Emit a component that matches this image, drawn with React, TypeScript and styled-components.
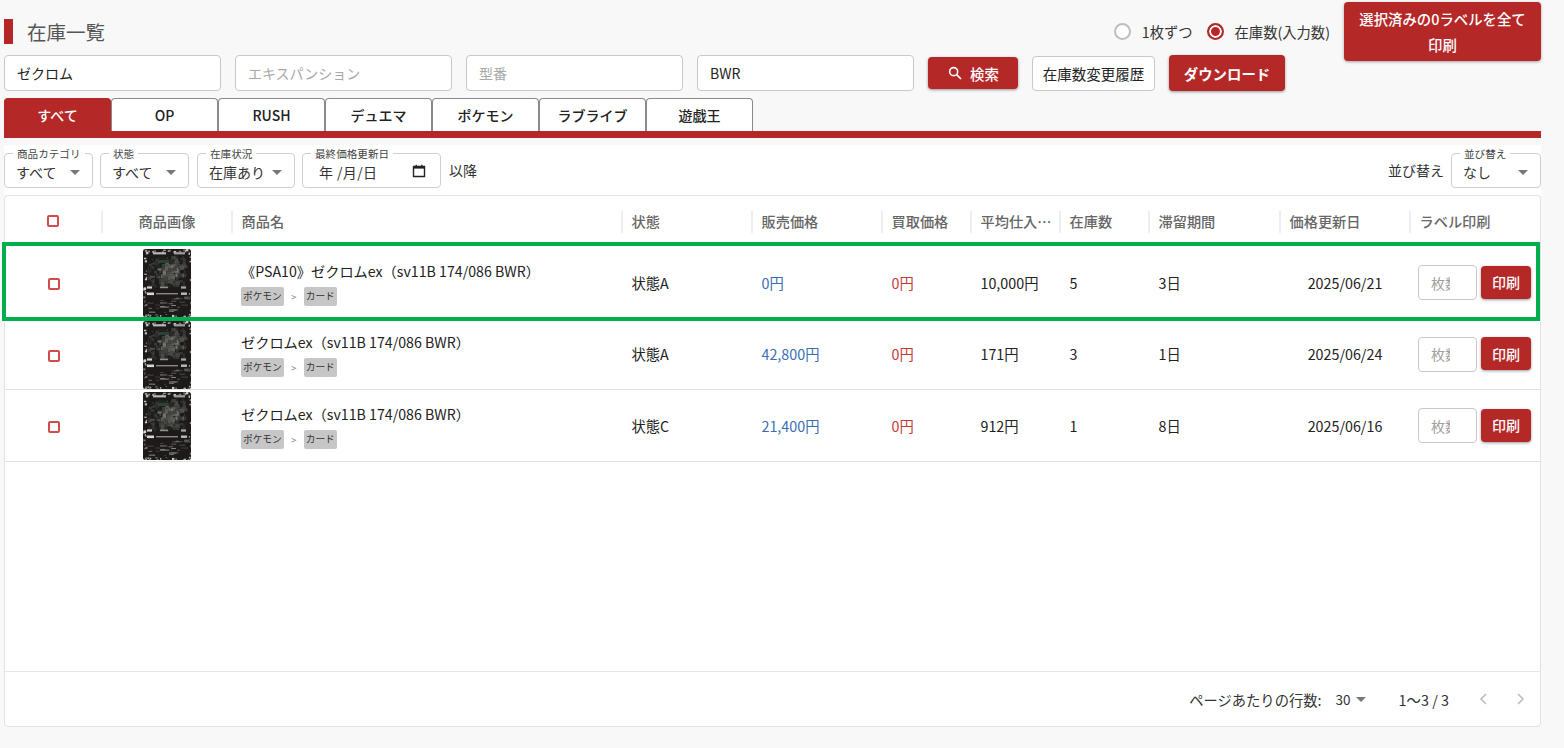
import React from "react";
import styled, { createGlobalStyle } from "styled-components";

const RED = "#b52828";
const COLS = "98px 130px 390px 130px 130px 89px 89px 89px 131px 130px 130px";

const Global = createGlobalStyle`
  html, body { margin: 0; padding: 0; background: #f8f8f8; }
  body { font-family: "Noto Sans CJK JP", "Noto Sans", sans-serif; color: #222; }
  * { box-sizing: border-box; }
`;

const Page = styled.div`
  width: 1564px;
  height: 748px;
  padding: 2px 23px 0 4px;
  position: relative;
  overflow: hidden;
`;
const Top = styled.div`
  display: grid;
  grid-template-columns: 1fr 197px;
  column-gap: 14px;
  height: 96px;
`;
const TopLeft = styled.div`
  display: flex;
  flex-direction: column;
`;
const TitleRow = styled.div`
  display: flex;
  align-items: center;
  justify-content: space-between;
  height: 25px;
  margin-top: 17px;
  margin-bottom: 11px;
`;
const Title = styled.h1`
  margin: 0;
  height: 25px;
  border-left: 9px solid ${RED};
  padding-left: 14px;
  font-size: 19.5px;
  line-height: 26px;
  font-weight: 400;
  color: #555;
`;
const Radios = styled.div`
  display: flex;
  align-items: center;
  font-size: 14.3px;
  color: #333;
`;
const Radio = styled.span<{ $on?: boolean }>`
  width: 17px;
  height: 17px;
  border-radius: 50%;
  border: 2px solid ${(p) => (p.$on ? RED : "#bdbdbd")};
  background: ${(p) => (p.$on ? RED : "#fff")};
  box-shadow: ${(p) => (p.$on ? "inset 0 0 0 2px #fff" : "none")};
  margin-left: ${(p) => (p.$on ? "14px" : "0")};
  margin-right: 11px;
`;
const PrintAll = styled.button`
  align-self: start;
  height: 59px;
  border: 0;
  border-radius: 4px;
  background: ${RED};
  color: #fff;
  font: 500 14.4px/26px "Noto Sans CJK JP", sans-serif;
  padding: 3px 14px;
  box-shadow: 0 1px 3px rgba(0, 0, 0, 0.35);
`;
const SearchRow = styled.div`
  display: flex;
  align-items: center;
  gap: 14px;
  height: 36px;
`;
const TextField = styled.input`
  width: 217px;
  height: 36px;
  border: 1px solid #c8c8c8;
  border-radius: 4px;
  background: #fff;
  padding: 0 12px;
  font: 400 14px "Noto Sans CJK JP", sans-serif;
  color: #222;
  &::placeholder { color: #a8a8a8; font-weight: 400; opacity: 1; }
`;
const RedButton = styled.button<{ $w: number; $h: number; $weight: number }>`
  width: ${(p) => p.$w}px;
  height: ${(p) => p.$h}px;
  display: flex;
  align-items: center;
  justify-content: center;
  gap: 7px;
  border: 0;
  border-radius: 4px;
  background: ${RED};
  color: #fff;
  font: ${(p) => p.$weight} 14.4px "Noto Sans CJK JP", sans-serif;
  padding: 0;
  box-shadow: 0 1px 3px rgba(0, 0, 0, 0.4);
`;
const HistoryButton = styled.button`
  width: 123px;
  height: 35px;
  border: 1px solid #c8c8c8;
  border-radius: 4px;
  background: #fff;
  color: #222;
  font: 400 14.5px "Noto Sans CJK JP", sans-serif;
  padding: 0;
  white-space: nowrap;
`;
const Tabs = styled.div`
  display: flex;
  height: 40px;
  border-bottom: 7px solid ${RED};
`;
const Tab = styled.div<{ $on?: boolean }>`
  width: 107px;
  height: 33px;
  display: flex;
  align-items: center;
  justify-content: center;
  border: 1px solid ${(p) => (p.$on ? RED : "#8a8a8a")};
  border-bottom: 0;
  border-radius: 4px 4px 0 0;
  background: ${(p) => (p.$on ? RED : "#fff")};
  color: ${(p) => (p.$on ? "#fff" : "#222")};
  font-size: 14px;
  font-weight: 500;
`;
const FilterBar = styled.div`
  margin-top: 7px;
  height: 50px;
  background: #fff;
  display: flex;
  align-items: flex-start;
  padding-top: 8px;
`;
const SelectBox = styled.div<{ $w: number; $gap: number }>`
  position: relative;
  width: ${(p) => p.$w}px;
  height: 35px;
  margin-right: ${(p) => p.$gap}px;
  border: 1px solid #cfcfcf;
  border-radius: 4px;
  background: #fff;
  display: flex;
  align-items: center;
  padding: 3px 0 0 11px;
  font-size: 14px;
  color: #333;
  flex: none;
`;
const Legend = styled.span`
  position: absolute;
  top: -7px;
  left: 8px;
  padding: 0 4px;
  background: #fff;
  font-size: 10.6px;
  line-height: 13px;
  color: #444;
  white-space: nowrap;
`;
const Caret = styled.span`
  position: absolute;
  right: 12px;
  top: 16px;
  width: 0;
  height: 0;
  border-left: 5px solid transparent;
  border-right: 5px solid transparent;
  border-top: 5px solid #777;
`;
const DateText = styled.span`
  font-size: 14px;
  padding-left: 5px;
  letter-spacing: 0.4px;
`;
const CalIcon = styled.svg`
  position: absolute;
  right: 14px;
  top: 10px;
`;
const FilterText = styled.span<{ $gap?: number }>`
  font-size: 14px;
  color: #333;
  line-height: 35px;
  margin-right: ${(p) => p.$gap ?? 0}px;
`;
const Spacer = styled.div`
  flex: 1;
`;
const TableCard = styled.div`
  height: 532px;
  background: #fff;
  border: 1px solid #e2e2e2;
  border-radius: 4px;
  display: flex;
  flex-direction: column;
  width: 1537px;
`;
const HeadRow = styled.div`
  display: grid;
  grid-template-columns: ${COLS};
  height: 51px;
  flex: none;
  align-items: center;
`;
const HeadCell = styled.div<{ $center?: boolean; $last?: boolean }>`
  height: 22px;
  display: flex;
  align-items: center;
  justify-content: ${(p) => (p.$center ? "center" : "flex-start")};
  padding-left: ${(p) => (p.$center ? "0" : "8.5px")};
  padding-bottom: 2px;
  border-right: 2px solid ${(p) => (p.$last ? "transparent" : "#eee")};
  font-size: 14.2px;
  font-weight: 500;
  color: #666;
  white-space: nowrap;
  overflow: hidden;
`;
const Row = styled.div`
  display: grid;
  grid-template-columns: ${COLS};
  height: 71.6px;
  flex: none;
  align-items: center;
  border-bottom: 1px solid #e0e0e0;
  font-size: 14.3px;
  color: #222;
`;
const Cell = styled.div<{ $color?: string; $center?: boolean }>`
  padding-left: ${(p) => (p.$center ? "0" : "8.5px")};
  padding-right: ${(p) => (p.$center ? "2px" : "0")};
  color: ${(p) => p.$color ?? "inherit"};
  text-align: ${(p) => (p.$center ? "center" : "left")};
  white-space: nowrap;
`;
const NameCell = styled.div`
  padding: 2px 0 0 8px;
`;
const CenterCell = styled.div<{ $drop: number; $nudge?: number }>`
  display: flex;
  justify-content: center;
  align-items: center;
  padding-top: ${(p) => p.$drop}px;
  padding-right: ${(p) => p.$nudge ?? 0}px;
`;
const Check = styled.span`
  display: block;
  width: 12px;
  height: 12px;
  border: 2px solid #d24c4c;
  border-radius: 2px;
`;
const ProductName = styled.div`
  font-size: 14.2px;
  line-height: 20px;
  color: #222;
  white-space: nowrap;
`;
const Crumbs = styled.div`
  display: flex;
  align-items: center;
  margin-top: 6px;
  font-size: 10px;
  color: #888;
`;
const Chip = styled.span`
  background: #c6c6c6;
  border-radius: 2px;
  height: 19px;
  padding: 0 2px;
  line-height: 19px;
  color: #333;
  font-size: 9.7px;
`;
const Sep = styled.span`
  width: 20px;
  text-align: center;
`;
const PrintCell = styled.div`
  display: flex;
  align-items: center;
  padding-left: 7px;
  gap: 4px;
`;
const Qty = styled.input`
  width: 59px;
  height: 35px;
  margin-top: 1px;
  border: 1px solid #c8c8c8;
  border-radius: 4px;
  padding: 0 26px 0 12px;
  font: 400 14px "Noto Sans CJK JP", sans-serif;
  background: #fff;
  &::placeholder { color: #a0a0a0; opacity: 1; }
`;
const PrintBtn = styled.button`
  width: 50px;
  height: 33px;
  border: 0;
  border-radius: 4px;
  background: ${RED};
  color: #fff;
  font: 500 14px "Noto Sans CJK JP", sans-serif;
  padding: 0;
  box-shadow: 0 1px 3px rgba(0, 0, 0, 0.4);
`;
const Footer = styled.div`
  margin-top: auto;
  height: 55px;
  flex: none;
  border-top: 1px solid #e6e6e6;
  display: flex;
  align-items: center;
  justify-content: flex-end;
  font-size: 14.3px;
  color: #333;
  padding-right: 13px;
`;
const PerPage = styled.span`
  margin-left: 14px;
  display: inline-flex;
  align-items: center;
  gap: 5px;
  font-size: 13.5px;
`;
const SmallCaret = styled.span`
  width: 0;
  height: 0;
  border-left: 5px solid transparent;
  border-right: 5px solid transparent;
  border-top: 5px solid #777;
`;
const Range = styled.span`
  margin-left: 33px;
  margin-right: 28px;
  font-size: 14.4px;
`;
const PagerIcon = styled.svg`
  margin-left: 22px;
  &:first-of-type { margin-left: 0; }
`;
const Highlight = styled.div`
  position: absolute;
  left: 2px;
  top: 242px;
  width: 1538px;
  height: 79px;
  border: 4px solid #00ae50;
  pointer-events: none;
`;

function noise(seed: number) {
  let s = seed;
  return () => {
    s = (s * 9301 + 49297) % 233280;
    return s / 233280;
  };
}

type Speck = { x: number; y: number; w: number; h: number; c: string };
const grey = (v: number) => `rgb(${v},${v},${v - 3})`;

const speckles: Speck[] = (() => {
  const r = noise(11);
  const out: Speck[] = [];
  // Mottled foil border
  for (let i = 0; i < 64; i++) {
    const t = r();
    const edge = r();
    const onSide = i % 2 === 0;
    const x = onSide ? (edge < 0.5 ? r() * 3 : 45 + r() * 3) : t * 48;
    const y = onSide ? t * 68 : edge < 0.5 ? r() * 2.4 : 65 + r() * 3;
    out.push({ x, y, w: 1 + r() * 1.6, h: 1 + r() * 1.6, c: grey(90 + Math.floor(r() * 130)) });
  }
  // Dragon illustration: grey mottling, denser in the middle
  for (let i = 0; i < 230; i++) {
    const x = 4 + r() * 37;
    const y = 7 + r() * 29;
    const d = Math.hypot((x - 24) / 20, (y - 22) / 15);
    const v = Math.max(30, 150 - d * 80 - r() * 70);
    out.push({ x, y, w: 1.5 + r() * 3.5, h: 1.5 + r() * 4, c: grey(Math.floor(v)) });
  }
  // Fine print at the foot of the card
  for (let i = 0; i < 34; i++) {
    out.push({ x: 4 + r() * 38, y: 47 + r() * 17, w: 1 + r() * 6, h: 1, c: grey(60 + Math.floor(r() * 80)) });
  }
  return out;
})();

function CardArt() {
  return (
    <svg width="48" height="68" viewBox="0 0 48 68" aria-hidden="true">
      <defs>
        <filter id="soft" x="0" y="0" width="100%" height="100%">
          <feGaussianBlur stdDeviation="0.5" />
        </filter>
        <clipPath id="cardEdge">
          <rect width="48" height="68" rx="2.5" />
        </clipPath>
      </defs>
      <g clipPath="url(#cardEdge)">
        <rect width="48" height="68" fill="#1d1a19" />
        <g filter="url(#soft)">
          {speckles.map((p, i) => (
            <rect key={i} x={p.x} y={p.y} width={p.w} height={p.h} fill={p.c} />
          ))}
          <rect x="15" y="11" width="11" height="3" fill="#2c4238" />
          <rect x="10" y="3.2" width="13" height="2.2" fill="#b8b8b8" />
          <rect x="31" y="3.2" width="11" height="2.2" fill="#a0a0a0" />
          <rect x="4" y="37.4" width="5" height="2.2" fill="#d0d0d0" />
          <rect x="17" y="37.6" width="8" height="1.6" fill="#909090" />
          <rect x="38" y="37.4" width="5" height="2.2" fill="#a8a8a8" />
          <rect x="4" y="43.5" width="7" height="2.6" fill="#d8d8d8" />
          <rect x="13" y="44" width="22" height="1.4" fill="#888888" />
          <rect x="38" y="43.5" width="6" height="2.4" fill="#bcbcbc" />
        </g>
      </g>
    </svg>
  );
}

const SELECTS = [
  { label: "商品カテゴリ", value: "すべて", w: 89, gap: 7 },
  { label: "状態", value: "すべて", w: 89, gap: 8 },
  { label: "在庫状況", value: "在庫あり", w: 98, gap: 7 },
];
const TABS = ["すべて", "OP", "RUSH", "デュエマ", "ポケモン", "ラブライブ", "遊戯王"];
const HEADS = ["商品名", "状態", "販売価格", "買取価格", "平均仕入…", "在庫数", "滞留期間", "価格更新日"];
const ROWS = [
  { name: "《PSA10》ゼクロムex（sv11B 174/086 BWR）", state: "状態A", sale: "0円", buy: "0円", avg: "10,000円", stock: "5", days: "3日", date: "2025/06/21" },
  { name: "ゼクロムex（sv11B 174/086 BWR）", state: "状態A", sale: "42,800円", buy: "0円", avg: "171円", stock: "3", days: "1日", date: "2025/06/24" },
  { name: "ゼクロムex（sv11B 174/086 BWR）", state: "状態C", sale: "21,400円", buy: "0円", avg: "912円", stock: "1", days: "8日", date: "2025/06/16" },
];

export default function App() {
  return (
    <Page>
      <Global />
      <Top>
        <TopLeft>
          <TitleRow>
            <Title>在庫一覧</Title>
            <Radios>
              <Radio />
              1枚ずつ
              <Radio $on />
              在庫数(入力数)
            </Radios>
          </TitleRow>
          <SearchRow>
            <TextField defaultValue="ゼクロム" />
            <TextField placeholder="エキスパンション" />
            <TextField placeholder="型番" />
            <TextField defaultValue="BWR" />
            <RedButton $w={90} $h={32} $weight={500}>
              <svg width="16" height="16" viewBox="0 0 24 24" fill="none" stroke="#fff" strokeWidth="2.4">
                <circle cx="10" cy="10" r="6" />
                <path d="M14.5 14.5 L21 21" />
              </svg>
              検索
            </RedButton>
            <HistoryButton>在庫数変更履歴</HistoryButton>
            <RedButton $w={116} $h={36} $weight={700}>ダウンロード</RedButton>
          </SearchRow>
        </TopLeft>
        <PrintAll>選択済みの0ラベルを全て印刷</PrintAll>
      </Top>
      <Tabs>
        {TABS.map((t, i) => (
          <Tab key={t} $on={i === 0}>{t}</Tab>
        ))}
      </Tabs>
      <FilterBar>
        {SELECTS.map((s) => (
          <SelectBox key={s.label} $w={s.w} $gap={s.gap}>
            <Legend>{s.label}</Legend>
            {s.value}
            <Caret />
          </SelectBox>
        ))}
        <SelectBox $w={139} $gap={8}>
          <Legend>最終価格更新日</Legend>
          <DateText>年 /月/日</DateText>
          <CalIcon width="14" height="14" viewBox="0 0 14 14">
            <path d="M1.5 2.5 H12.5 V12.5 H1.5 Z" fill="none" stroke="#222" strokeWidth="1.4" />
            <rect x="1.5" y="2" width="11" height="2.6" fill="#222" />
            <rect x="3.5" y="0.8" width="1.4" height="2" fill="#222" />
            <rect x="9.1" y="0.8" width="1.4" height="2" fill="#222" />
          </CalIcon>
        </SelectBox>
        <FilterText>以降</FilterText>
        <Spacer />
        <FilterText $gap={7}>並び替え</FilterText>
        <SelectBox $w={90} $gap={0}>
          <Legend>並び替え</Legend>
          なし
          <Caret />
        </SelectBox>
      </FilterBar>
      <TableCard>
        <HeadRow>
          <HeadCell $center><Check /></HeadCell>
          <HeadCell $center>商品画像</HeadCell>
          {HEADS.map((h) => (
            <HeadCell key={h}>{h}</HeadCell>
          ))}
          <HeadCell $last>ラベル印刷</HeadCell>
        </HeadRow>
        {ROWS.map((r, i) => (
          <Row key={i}>
            <CenterCell $drop={4}><Check /></CenterCell>
            <CenterCell $drop={2} $nudge={2}><CardArt /></CenterCell>
            <NameCell>
              <ProductName>{r.name}</ProductName>
              <Crumbs>
                <Chip>ポケモン</Chip>
                <Sep>&gt;</Sep>
                <Chip>カード</Chip>
              </Crumbs>
            </NameCell>
            <Cell>{r.state}</Cell>
            <Cell $color="#3a6db5">{r.sale}</Cell>
            <Cell $color="#c23b3b">{r.buy}</Cell>
            <Cell>{r.avg}</Cell>
            <Cell>{r.stock}</Cell>
            <Cell>{r.days}</Cell>
            <Cell $center>{r.date}</Cell>
            <PrintCell>
              <Qty placeholder="枚数" />
              <PrintBtn>印刷</PrintBtn>
            </PrintCell>
          </Row>
        ))}
        <Footer>
          ページあたりの行数:
          <PerPage>30<SmallCaret /></PerPage>
          <Range>1〜3 / 3</Range>
          <PagerIcon width="14" height="14" viewBox="0 0 14 14" fill="none" stroke="#bdbdbd" strokeWidth="1.6">
            <path d="M9 2 L4 7 L9 12" />
          </PagerIcon>
          <PagerIcon width="14" height="14" viewBox="0 0 14 14" fill="none" stroke="#bdbdbd" strokeWidth="1.6">
            <path d="M5 2 L10 7 L5 12" />
          </PagerIcon>
        </Footer>
      </TableCard>
      <Highlight />
    </Page>
  );
}
